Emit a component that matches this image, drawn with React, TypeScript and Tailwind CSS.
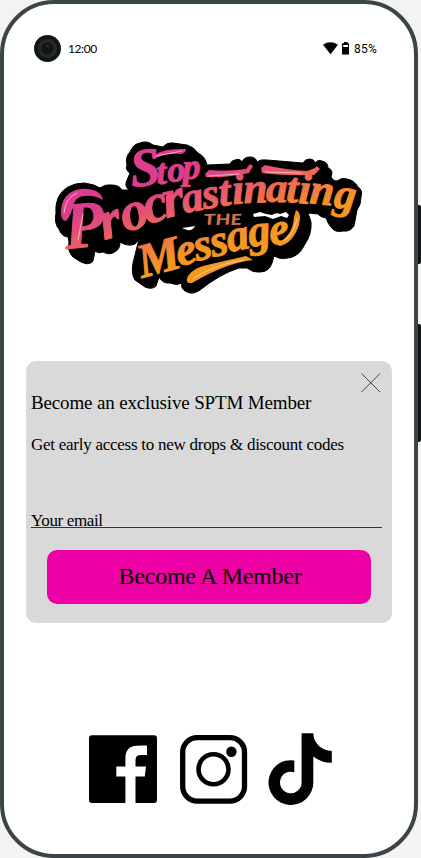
import React from "react";

type Run = { text: string; x: number[]; y: number[]; rotate: number[]; size: number };

const runs: Run[] = [
  { text: "S", x: [132], y: [187], rotate: [-6], size: 54 },
  { text: "top", x: [157, 168, 183], y: [184, 182, 179], rotate: [-4, -4, -2], size: 36 },
  { text: "P", x: [66], y: [249], rotate: [-6], size: 66 },
  { text: "rocr", x: [104, 125, 147, 166], y: [240, 232, 224, 218], rotate: [-16, -15, -14, -12], size: 55 },
  {
    text: "astinating",
    x: [184, 204, 220, 233, 244, 266, 286, 298, 309, 333],
    y: [213, 209, 206, 204, 203, 202, 202, 203, 203, 207],
    rotate: [-10, -8, -6, -4, -2, 0, 2, 4, 6, 8],
    size: 43,
  },
  { text: "M", x: [142], y: [278], rotate: [-15], size: 48 },
  {
    text: "essage",
    x: [179, 197, 213, 229, 250, 271],
    y: [266, 261, 257, 252, 247, 245],
    rotate: [-13, -13, -12, -11, -9, -9],
    size: 45,
  },
];

function Logo() {
  return (
    <svg width="310" height="156" viewBox="54 140 310 156" role="img" className="block overflow-visible">
      <defs>
        <linearGradient id="sunset" gradientUnits="userSpaceOnUse" x1="0" y1="240" x2="25.6" y2="313">
          <stop offset="0" stopColor="#dc3d8c" />
          <stop offset="0.5" stopColor="#ee655a" />
          <stop offset="1" stopColor="#f5981f" />
        </linearGradient>
      </defs>
      <path
        fill="#000"
        stroke="#000"
        strokeWidth="1"
        strokeLinejoin="round"
        d="M56 213Q55 206 58 198Q61 191 68 187Q75 183 84 183Q94 184 100 188Q105 184 112 185Q119 185 122 190L129 190Q124 186 127 180L130 173Q125 170 127 165Q125 157 130 152Q133 144 140 143Q147 140 153 145L163 147Q167 142 173 143L187 145Q194 147 198 153Q205 156 207 165L230 164Q232 160 235 160Q240 158 242 162Q244 157 250 157Q256 157 257 162Q260 159 267 160L303 163Q305 159 310 159Q314 159 315 163Q318 159 322 161Q328 162 328 168Q334 170 331 177Q334 182 337 181Q342 177 347 179Q354 180 358 187Q363 190 361 197Q361 205 357 210L354 226Q350 232 343 231Q335 233 331 227Q328 224 326 218Q320 217 318 214L308 213L311 222Q312 234 305 244Q299 257 288 258Q280 260 274 256L272 263Q269 272 260 272Q253 273 247 268L239 268Q220 274 200 290Q193 295 187 292Q180 289 182 283Q177 286 170 283Q163 284 159 277L156 286Q152 290 145 287L135 280Q131 274 133 263L138 243L140 239L135 244Q128 247 120 242Q120 249 116 251Q110 256 103 252Q98 254 95 251L93 261Q89 266 81 262L73 257Q67 251 69 242L68 237Q61 236 59 229Q54 224 56 213Z"
      />
      <path fill="#fff" d="M253 214L260 212L266 214L272 215Q276 212 280 214L286 212L289 215L287 218L281 216L273 219L265 216L254 217ZM182 228Q189 227 195 226Q193 231 187 230Z" />
      <g fill="url(#sunset)" stroke="url(#sunset)" strokeWidth="1" strokeLinejoin="round" className="font-['Liberation_Serif',serif] font-bold italic">
        {runs.map((run, i) => (
          <text key={i} x={run.x.join(" ")} y={run.y.join(" ")} rotate={run.rotate.join(" ")} fontSize={run.size}>
            {run.text}
          </text>
        ))}
      </g>
      <text x="204" y="225" rotate="-3" textLength="38" lengthAdjust="spacingAndGlyphs" fontSize="15" fill="#cf7047" className="font-['Lato',sans-serif] font-black italic">
        THE
      </text>
      {/* Brush strokes extending the lettering */}
      <g fill="url(#sunset)">
        <path d="M61 213Q61 195 76 190Q86 187 96 191Q102 194 103 200Q94 195 85 196Q77 196 74 203Q71 216 66 221Q61 220 61 213Z" />
        <path d="M154 155Q164 148 186 149Q186 153 181 154Q167 153 156 158Z" />
        <path d="M205 174L209 170Q227 172 246 169L250 164L253 166L249 173Q228 178 206 177Z" />
        <path d="M261 168L265 165Q286 170 307 171L315 168L317 166L320 169L314 175Q285 176 262 173Z" />
        <path d="M188 276Q193 268 207 265L246 256L253 260Q226 263 192 283Q184 284 188 276Z" />
        <path d="M275 244Q293 237 294 217L296 210Q302 212 299 225Q293 243 280 246Z" />
      </g>
      <g fill="none" stroke="#ffe5dc" strokeWidth="0.9" strokeLinecap="round" opacity="0.75">
        <path d="M64 213Q65 198 77 193M83 214L78 240M156 156L182 151M208 176L239 174M265 172L301 173M194 278Q216 264 244 260M285 240Q294 233 297 219" />
      </g>
    </svg>
  );
}

function SocialLinks() {
  return (
    <div className="mt-[109px] ml-[84px] flex">
      <svg width="70" height="74" viewBox="88 732 70 74">
        <path fillRule="evenodd" d="M92 735.3H154Q157 735.3 157 738.3V800Q157 803 154 803H135.5V776.5H144.8L146 766.5H135.5V760Q135.5 755 141 755H147V745.5Q141 745.2 136.5 745.7Q125.4 746.5 125.4 758V766.5H116.3V776.5H125.4V803H92Q89 803 89 800V738.3Q89 735.3 92 735.3Z" />
      </svg>
      <svg width="70" height="74" viewBox="178 732 70 74" className="ml-5">
        <rect x="182.7" y="737.7" width="61.8" height="63.4" rx="14.5" fill="none" stroke="#000" strokeWidth="5.3" />
        <circle cx="213.5" cy="769.3" r="15" fill="none" stroke="#000" strokeWidth="4.6" />
        <circle cx="231.4" cy="751.7" r="5.2" />
      </svg>
      <svg width="66" height="74" viewBox="267 732 66 74" className="ml-[19px]">
        <path fill="#050206" d="M301.6 733.3H313.3Q313.5 741 319 746Q324 750.5 331.8 751V762.8Q321.5 763 313.3 756.5V782.5A22.4 22.4 0 1 1 294.3 760.4V772.3A10.8 10.8 0 1 0 301.6 782.5Z" />
      </svg>
    </div>
  );
}

export default function App() {
  return (
    <div className="flex h-[858px] w-[421px] overflow-hidden bg-[#f3f3f3] text-black">
      <main className="h-[858px] w-[418px] shrink-0 rounded-[54px] border-4 border-[#3b4549] bg-white">
        <header className="mt-[31px] ml-[30px] flex h-[27px] w-[343px] items-center text-[12px]">
          <svg width="27" height="27" viewBox="0 0 27 27">
            <circle cx="13.5" cy="13.5" r="13.5" fill="#111517" />
            <circle cx="13.5" cy="13.5" r="9.5" fill="#242a2c" />
            <circle cx="13.5" cy="13.5" r="6" fill="#111517" />
            <circle cx="13.5" cy="11" r="1" fill="#353b3e" />
          </svg>
          <span className="ml-[7px] font-['Lato',sans-serif] text-[12px] tracking-[-0.4px]">12:00</span>
          <svg width="27" height="13" viewBox="0 0 27 13" className="ml-auto">
            <path d="M0 2.7Q7.5-2 15 2.7L7.5 12.3Z" />
            <path fillRule="evenodd" d="M21 0H24.5V1.3H26V12.5H19V1.3H21ZM20.2 3V5H25V3Z" />
          </svg>
          <span className="ml-1 font-['Roboto',sans-serif] text-[12px] tracking-[0.2px]">85%</span>
        </header>

        <div className="mt-[78px] ml-[50px]">
          <Logo />
        </div>

        <section className="mt-[65px] ml-[22px] flex h-[262px] w-[366px] flex-col rounded-[10px] bg-[#d9d9d9] px-[5px] font-['Liberation_Serif',serif]">
          <button aria-label="Close" className="mt-3 mr-[6px] h-5 w-5 self-end">
            <svg width="20" height="20" viewBox="0 0 20 20" fill="none" stroke="#222" strokeWidth="0.8">
              <path d="M.5.5L19 19M19 .5L.5 19" />
            </svg>
          </button>
          <h1 className="-mt-[2px] h-6 text-[19px] leading-6 tracking-[-0.15px] whitespace-nowrap">Become an exclusive SPTM Member</h1>
          <p className="mt-[18px] h-6 text-[17px] leading-6 tracking-[-0.26px] whitespace-nowrap">Get early access to new drops &amp; discount codes</p>
          <div className="mt-[52px] h-[19px] w-[351px] border-b border-[#333] text-[17px] leading-6 tracking-[-0.35px]">Your email</div>
          <button className="mt-[22px] ml-4 h-[54px] w-[324px] rounded-[10px] bg-[#ed00a4] pb-[2px] pl-[2px] text-[24px] leading-[52px] tracking-[-0.25px]">Become A Member</button>
        </section>

        <SocialLinks />
      </main>
      <aside className="flex w-[3px] flex-col">
        <div className="mt-[205px] h-[59px] rounded-r-[2px] bg-[#101516]" />
        <div className="mt-[60px] h-[118px] rounded-r-[2px] bg-[#101516]" />
      </aside>
    </div>
  );
}
